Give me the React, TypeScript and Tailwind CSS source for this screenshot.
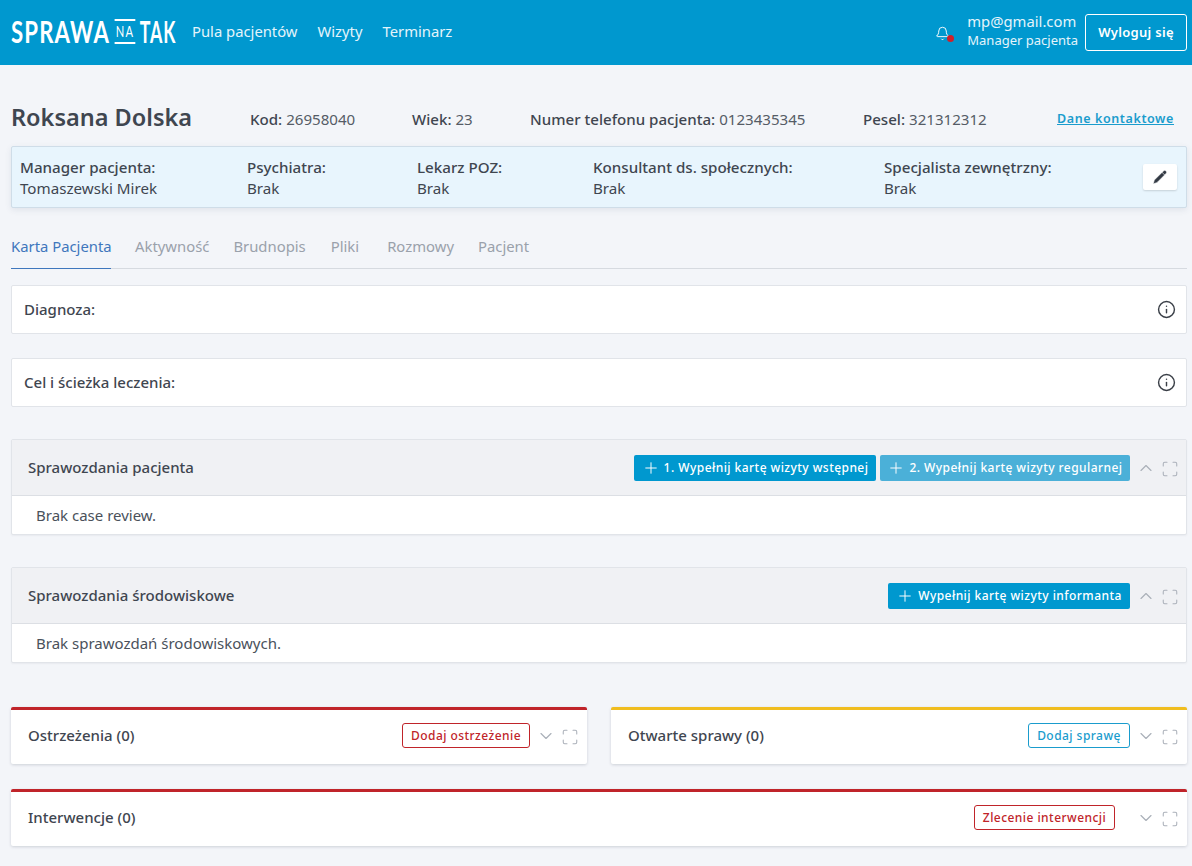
import { Bell, ChevronDown, ChevronUp, Info, Maximize, Pencil, Plus } from "lucide-react";
import type { ReactNode } from "react";

const font = { fontFamily: '"Noto Sans", sans-serif' };

function Logo() {
  return (
    <div className="w-[166px] shrink-0 pb-[3px]">
      <div className="w-max origin-left scale-x-[0.74] flex items-center whitespace-nowrap text-white font-['Lato',sans-serif] font-bold text-[30px] leading-none tracking-[1.5px]">
        <span>SPRAWA</span>
        <span className="ml-[6px] mr-[6px] border-y-2 border-white text-[15px] leading-[18px] tracking-[1.5px] font-normal h-[25px] flex items-center px-[2px]">NA</span>
        <span className="inline-block origin-left scale-x-[0.8]">TAK</span>
      </div>
    </div>
  );
}

function Header() {
  return (
    <header className="h-[65px] bg-[#0098cf] flex items-center pl-[11px] pr-[5px] text-white">
      <Logo />
      <nav className="flex items-center gap-[20px] ml-[15px] pb-[2px] text-[14.8px] text-[#e4f4fb]">
        <span>Pula pacjentów</span>
        <span>Wizyty</span>
        <span>Terminarz</span>
      </nav>
      <div className="ml-auto flex items-center">
        <div className="relative mr-[17px] mt-[1px]">
          <Bell size={15} strokeWidth={1.5} />
          <span className="absolute right-[-4px] bottom-[-1px] w-[7px] h-[7px] rounded-full bg-[#d0202a]" />
        </div>
        <div className="flex flex-col mr-[7px] mb-[4px]">
          <span className="text-[14.8px] leading-[20px] text-[#e4f4fb]">mp@gmail.com</span>
          <span className="text-[13px] leading-[19px] text-[#e4f4fb]">Manager pacjenta</span>
        </div>
        <button className="w-[102px] h-[37px] border border-white rounded-[3px] text-[13px] font-semibold tracking-[0.3px]">Wyloguj się</button>
      </div>
    </header>
  );
}

function Meta({ label, value, className }: { label: string; value: string; className: string }) {
  return (
    <span className={className}>
      <span className="font-medium text-[#3f4650]">{label}</span> {value}
    </span>
  );
}

function Person({ label, name, className }: { label: string; name: string; className: string }) {
  return (
    <div className={`pt-[1px] ${className}`}>
      <div className="font-medium text-[15.15px] leading-[20px] text-[#3f4650]">{label}</div>
      <div className="text-[15.15px] leading-[22px] text-[#3f4650]">{name}</div>
    </div>
  );
}

function PatientHead() {
  return (
    <>
      <div className="flex items-center h-[32px] mt-[38px] text-[15.1px] text-[#555c66]">
        <h1 className="w-[239px] text-[23.5px] font-semibold text-[#3f4650] leading-none pb-[2px]">Roksana Dolska</h1>
        <Meta className="w-[162px]" label="Kod:" value="26958040" />
        <Meta className="w-[118px]" label="Wiek:" value="23" />
        <Meta className="w-[333px]" label="Numer telefonu pacjenta:" value="0123435345" />
        <Meta className="w-[194px]" label="Pesel:" value="321312312" />
        <a className="text-[12.5px] font-semibold underline text-[#1a9ccd] tracking-[0.6px]">Dane kontaktowe</a>
      </div>
      <div className="mt-[11px] h-[62px] bg-[#e8f5fd] border border-[#cfdde8] rounded-[2px] shadow-[0_2px_6px_rgba(60,80,110,0.1)] flex items-center pl-[8px] pr-[9px]">
        <Person className="w-[227px]" label="Manager pacjenta:" name="Tomaszewski Mirek" />
        <Person className="w-[170px]" label="Psychiatra:" name="Brak" />
        <Person className="w-[176px]" label="Lekarz POZ:" name="Brak" />
        <Person className="w-[291px]" label="Konsultant ds. społecznych:" name="Brak" />
        <Person className="flex-1" label="Specjalista zewnętrzny:" name="Brak" />
        <button className="w-[34px] h-[26px] bg-white rounded-[2px] shadow-[0_1px_2px_rgba(0,0,0,0.15)] flex items-center justify-center">
          <Pencil size={16} fill="#333a44" stroke="#ffffff" strokeWidth={1} />
        </button>
      </div>
    </>
  );
}

function Tabs() {
  const rest = [
    ["Aktywność", "mr-[24px]"],
    ["Brudnopis", "mr-[25px]"],
    ["Pliki", "mr-[28px]"],
    ["Rozmowy", "mr-[24px]"],
    ["Pacjent", ""],
  ];
  return (
    <div className="mt-[20px] h-[41px] border-b border-[#d6dae0] flex text-[14.85px]">
      <div className="h-[41px] w-[100px] whitespace-nowrap border-b border-[#3f77bd] text-[#3f77bd] leading-[36px] mr-[24px]">Karta Pacjenta</div>
      {rest.map(([name, cls]) => (
        <div key={name} className={`leading-[36px] text-[#9aa1ab] ${cls}`}>{name}</div>
      ))}
    </div>
  );
}

function InfoCard({ title, className }: { title: string; className: string }) {
  return (
    <div className={`h-[49px] bg-white border border-[#e1e4e9] rounded-[2px] flex items-center justify-between pl-[12px] pr-[10px] ${className}`}>
      <span className="text-[15px] font-medium text-[#3f4650]">{title}</span>
      <Info size={19} strokeWidth={1.8} className="text-[#3a3f47]" />
    </div>
  );
}

function PanelIcons({ up }: { up?: boolean }) {
  return (
    <div className="flex items-center gap-[5px] ml-[6px] text-[#aab0b9]">
      {up ? <ChevronUp size={20} strokeWidth={1.4} /> : <ChevronDown size={20} strokeWidth={1.4} />}
      <Maximize size={18} strokeWidth={1.4} className="mt-[3px]" />
    </div>
  );
}

function FillButton({ label, light, className }: { label: string; light?: boolean; className: string }) {
  return (
    <button className={`h-[26px] rounded-[2px] flex items-center justify-center gap-[4px] text-white text-[12px] font-medium tracking-[0.45px] ${light ? "bg-[#4bb0d8]" : "bg-[#0098cf]"} ${className}`}>
      <Plus size={18} strokeWidth={1.3} />
      {label}
    </button>
  );
}

function ReportPanel({ title, empty, className, children }: { title: string; empty: string; className: string; children: ReactNode }) {
  return (
    <section className={`h-[96px] border border-[#e1e4e9] rounded-[2px] bg-white shadow-[0_1px_2px_rgba(60,70,90,0.06)] ${className}`}>
      <div className="h-[56px] bg-[#f0f1f4] border-b border-[#dcdfe4] flex items-center pl-[16px] pr-[7px]">
        <h2 className="text-[15px] font-medium text-[#3f4650] mr-auto">{title}</h2>
        {children}
        <PanelIcons up />
      </div>
      <div className="pl-[24px] h-[39px] flex items-center text-[15px] text-[#4a515b]">{empty}</div>
    </section>
  );
}

function AlertPanel({ title, bar, action, tone, actionWidth, iconsGap, className }: {
  title: string;
  bar: string;
  action: string;
  tone: string;
  actionWidth: string;
  iconsGap: string;
  className: string;
}) {
  return (
    <section className={`h-[57px] bg-white border-t-[3px] rounded-[2px] shadow-[0_1px_3px_rgba(60,70,90,0.2)] flex items-center pl-[17px] pr-[8px] pb-[3px] ${bar} ${className}`}>
      <h2 className="text-[15px] font-medium text-[#3f4650] mr-auto">{title}</h2>
      <button className={`h-[25px] border rounded-[3px] bg-white text-[12px] font-medium tracking-[0.45px] ${tone} ${actionWidth}`}>{action}</button>
      <div className={iconsGap}><PanelIcons /></div>
    </section>
  );
}

export default function App() {
  return (
    <div style={font} className="min-h-[866px] h-[866px] overflow-hidden bg-[#f3f5f9]">
      <Header />
      <main className="pl-[11px] pr-[5px]">
        <PatientHead />
        <Tabs />
        <InfoCard className="mt-[16px]" title="Diagnoza:" />
        <InfoCard className="mt-[24px]" title="Cel i ścieżka leczenia:" />
        <ReportPanel className="mt-[32px]" title="Sprawozdania pacjenta" empty="Brak case review.">
          <FillButton className="w-[242px]" label="1. Wypełnij kartę wizyty wstępnej" />
          <FillButton light className="w-[250px] ml-[4px]" label="2. Wypełnij kartę wizyty regularnej" />
        </ReportPanel>
        <ReportPanel className="mt-[32px]" title="Sprawozdania środowiskowe" empty="Brak sprawozdań środowiskowych.">
          <FillButton className="w-[242px]" label="Wypełnij kartę wizyty informanta" />
        </ReportPanel>
        <div className="mt-[44px] flex gap-[24px]">
          <AlertPanel className="w-[576px]" title="Ostrzeżenia (0)" bar="border-[#c0242a]" action="Dodaj ostrzeżenie" tone="border-[#c0242a] text-[#c0242a]" actionWidth="w-[128px]" iconsGap="" />
          <AlertPanel className="w-[576px]" title="Otwarte sprawy (0)" bar="border-[#f0bd1f]" action="Dodaj sprawę" tone="border-[#1a9ccd] text-[#1a9ccd]" actionWidth="w-[102px]" iconsGap="" />
        </div>
        <AlertPanel className="mt-[25px]" title="Interwencje (0)" bar="border-[#c0242a]" action="Zlecenie interwencji" tone="border-[#c0242a] text-[#c0242a]" actionWidth="w-[141px]" iconsGap="ml-[15px]" />
      </main>
    </div>
  );
}
